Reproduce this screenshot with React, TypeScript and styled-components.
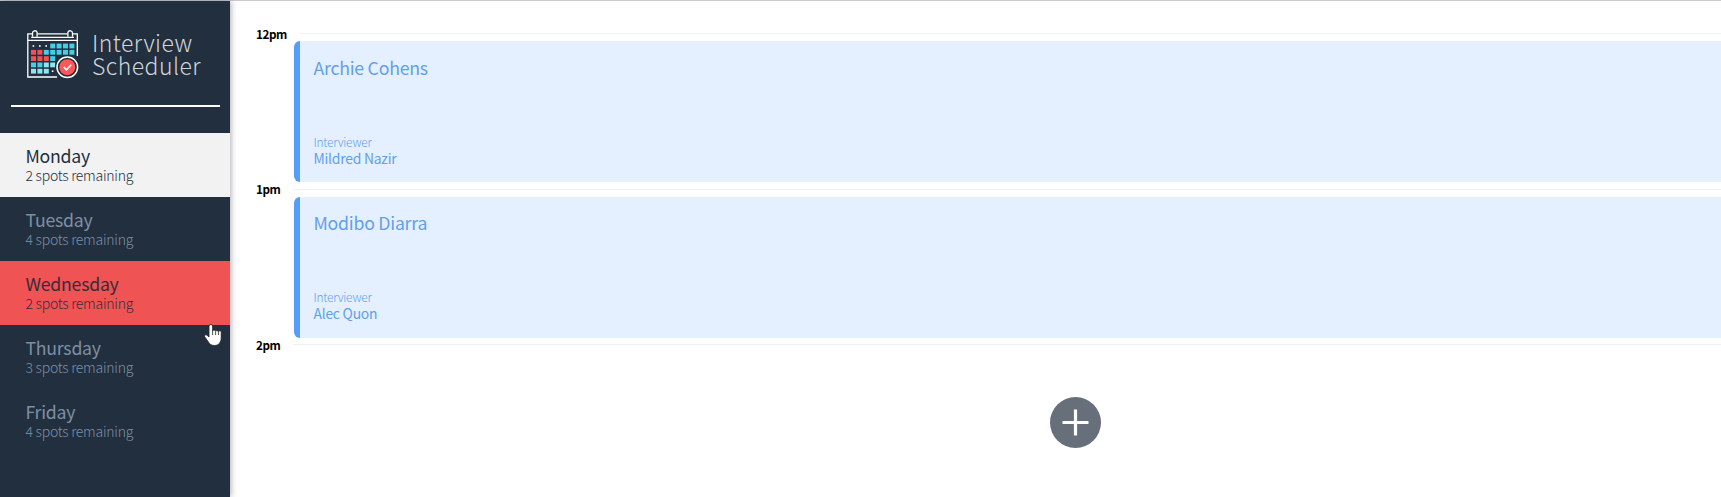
import React from "react";
import styled, { createGlobalStyle, css } from "styled-components";

const GlobalStyle = createGlobalStyle`
  * { box-sizing: border-box; }
  body {
    margin: 0;
    background: #fff;
    font-family: "Noto Sans CJK SC", "Noto Sans", sans-serif;
    overflow: hidden;
  }
`;

const Layout = styled.main`
  display: flex;
  height: 497px;
  border-top: 1px solid #c9cbcd;
`;

const Sidebar = styled.section`
  position: relative;
  flex: 0 0 230px;
  background: #222f3e;
  box-shadow: 1px 0 6px rgba(60, 50, 75, 0.4);
`;

const Brand = styled.header`
  display: flex;
  align-items: flex-start;
  height: 104px;
  padding: 28px 0 0 26px;
`;

const BrandName = styled.h1`
  margin: 2px 0 0 12px;
  font-size: 23px;
  font-weight: 300;
  line-height: 23px;
  letter-spacing: 0.45px;
  color: #d0d5dc;
`;

const Separator = styled.hr`
  width: 209px;
  height: 2px;
  margin: 0 0 26px 11px;
  border: 0;
  background: #fff;
`;

const DayList = styled.ul`
  margin: 0;
  padding: 0;
  list-style: none;
`;

type DayState = "selected" | "hover" | "idle";

const dayStyles = {
  selected: css`
    background: #f2f2f2;
    color: #222f3e;
  `,
  hover: css`
    background: #ef5353;
    color: #3a2b3b;
  `,
  idle: css`
    color: #7d8fa5;
  `,
};

const DayItem = styled.li<{ $state: DayState }>`
  height: 64px;
  padding: 11px 0 0 25.5px;
  letter-spacing: -0.25px;
  ${({ $state }) => dayStyles[$state]}
`;

const DayName = styled.h2`
  margin: 0;
  font-size: 17.7px;
  font-weight: 400;
  line-height: 22px;
`;

const Spots = styled.h3`
  margin: 1px 0 0;
  font-size: 14px;
  font-weight: 300;
  line-height: 17px;
`;

const Pointer = styled.svg`
  position: absolute;
  left: 203px;
  top: 321px;
`;

const Schedule = styled.section`
  flex: 1;
  min-width: 0;
  padding: 25px 0 0 26px;
`;

const Slot = styled.article<{ $last?: boolean }>`
  height: ${({ $last }) => ($last ? 155 : 156)}px;
`;

const SlotHeader = styled.header`
  display: flex;
  height: 15px;
`;

const Hour = styled.h4<{ $wide?: boolean }>`
  flex: 0 0 ${({ $wide }) => ($wide ? 44 : 37)}px;
  margin: -1px 0 0;
  font-size: 11.7px;
  font-weight: 700;
  line-height: 17px;
  letter-spacing: -0.4px;
  color: #000;

  ${Slot} + ${Slot} & {
    margin-top: -2px;
  }
`;

const Rule = styled.div`
  flex: 1;
  height: 1px;
  margin-top: 7px;
  background: #eff2f4;
`;

const Card = styled.div`
  display: flex;
  flex-direction: column;
  justify-content: space-between;
  height: 141px;
  margin-left: 38px;
  padding: 13px 0 15px 13.5px;
  border-left: 6px solid #549df9;
  border-radius: 6px 0 0 6px;
  background: #e4f0ff;
  color: #629fec;
  letter-spacing: -0.24px;

  ${Slot} + ${Slot} & {
    padding-top: 12px;
    padding-bottom: 16px;
  }
`;

const Student = styled.h2`
  margin: 0;
  font-size: 17.7px;
  font-weight: 400;
  line-height: 26px;
`;

const Label = styled.h4`
  margin: 0;
  font-size: 11.9px;
  font-weight: 300;
  line-height: 16px;
`;

const Interviewer = styled.h3`
  margin: 0;
  font-size: 13.9px;
  font-weight: 400;
  line-height: 17px;
`;

const AddArea = styled.div`
  display: flex;
  justify-content: center;
  margin: 45px 0 0 38px;
`;

const AddButton = styled.button`
  display: flex;
  align-items: center;
  justify-content: center;
  width: 51px;
  height: 51px;
  margin-left: 136px;
  padding: 0;
  border: 0;
  border-radius: 50%;
  background: #666f7a;
`;

const BLUE = "#43cfe8";
const RED = "#f15354";
const PALE = "#8ee6f0";

const cells: (string | null)[][] = [
  [null, null, null, BLUE, BLUE, BLUE, BLUE],
  [RED, RED, BLUE, BLUE, BLUE, BLUE, BLUE],
  [RED, RED, RED, BLUE],
  [BLUE, BLUE, PALE, PALE],
  [PALE, PALE, PALE, null],
];

const CalendarLogo = () => (
  <svg width="54" height="50" viewBox="0 0 54 50" fill="none">
    <g stroke="#fff" strokeWidth="1.3">
      <path d="M6.5 4.8H1.8V48H31M46.5 4.8H51.3V27" />
      <path d="M1.8 11.3H51.3M11.5 4.8H41.5M5.2 8.3H48" />
      <path d="M6.5 7.8V4.2a2.4 2.4 0 0 1 4.6-1V7.8M46.5 7.8V4.2a2.4 2.4 0 0 0-4.6-1V7.8" />
    </g>
    {cells.map((row, r) =>
      row.map((fill, c) =>
        fill ? (
          <rect key={`${r}-${c}`} x={5 + c * 6.4} y={14.6 + r * 6.3} width="5" height="4.8" fill={fill} />
        ) : (
          <rect key={`${r}-${c}`} x={6.6 + c * 6.4} y={16.2 + r * 6.3} width="1.6" height="1.6" fill="#fff" />
        )
      )
    )}
    <circle cx="41.3" cy="38.2" r="12.2" fill="#222f3e" />
    <circle cx="41.3" cy="38.2" r="10.3" stroke="#fff" strokeWidth="1.5" />
    <circle cx="41.3" cy="38.2" r="8" fill="#ff5757" />
    <path d="M37.6 38l2.8 2.8 4.8-5" stroke="#fff" strokeWidth="1.6" />
  </svg>
);

const days: { name: string; spots: number; state: DayState }[] = [
  { name: "Monday", spots: 2, state: "selected" },
  { name: "Tuesday", spots: 4, state: "idle" },
  { name: "Wednesday", spots: 2, state: "hover" },
  { name: "Thursday", spots: 3, state: "idle" },
  { name: "Friday", spots: 4, state: "idle" },
];

const appointments = [
  { hour: "12pm", student: "Archie Cohens", interviewer: "Mildred Nazir" },
  { hour: "1pm", student: "Modibo Diarra", interviewer: "Alec Quon" },
];

export default function App() {
  return (
    <>
      <GlobalStyle />
      <Layout>
        <Sidebar>
          <Brand>
            <CalendarLogo />
            <BrandName>
              Interview
              <br />
              Scheduler
            </BrandName>
          </Brand>
          <Separator />
          <DayList>
            {days.map((day) => (
              <DayItem key={day.name} $state={day.state}>
                <DayName>{day.name}</DayName>
                <Spots>{`${day.spots} spots remaining`}</Spots>
              </DayItem>
            ))}
          </DayList>
          <Pointer width="20" height="26" viewBox="0 0 20 26">
            <path
              d="M6 15V4.2a1.8 1.8 0 0 1 3.6 0V9a1.6 1.6 0 0 1 3 .3 1.5 1.5 0 0 1 2.8.5 1.4 1.4 0 0 1 2.8.8V16c0 4-2.5 7.5-6.5 7.5-3 0-5-1-6.5-3.8L1.7 14.8c-.8-1.5 1-2.8 2.3-1.6z"
              fill="#fff"
              stroke="#222"
              strokeWidth="0.8"
            />
            <path d="M9.6 9v4M12.6 9.5v3.5M15.4 10v3" stroke="#222" strokeWidth="0.8" />
          </Pointer>
        </Sidebar>
        <Schedule>
          {appointments.map((item, index) => (
            <Slot key={item.hour} $last={index === appointments.length - 1}>
              <SlotHeader>
                <Hour $wide={item.hour === "12pm"}>{item.hour}</Hour>
                <Rule />
              </SlotHeader>
              <Card>
                <Student>{item.student}</Student>
                <div>
                  <Label>Interviewer</Label>
                  <Interviewer>{item.interviewer}</Interviewer>
                </div>
              </Card>
            </Slot>
          ))}
          <SlotHeader>
            <Hour>2pm</Hour>
            <Rule />
          </SlotHeader>
          <AddArea>
            <AddButton aria-label="Add">
              <svg width="27" height="27" viewBox="0 0 27 27">
                <path d="M13.5 0.5v26M0.5 13.5h26" stroke="#fff" strokeWidth="3.2" />
              </svg>
            </AddButton>
          </AddArea>
        </Schedule>
      </Layout>
    </>
  );
}
